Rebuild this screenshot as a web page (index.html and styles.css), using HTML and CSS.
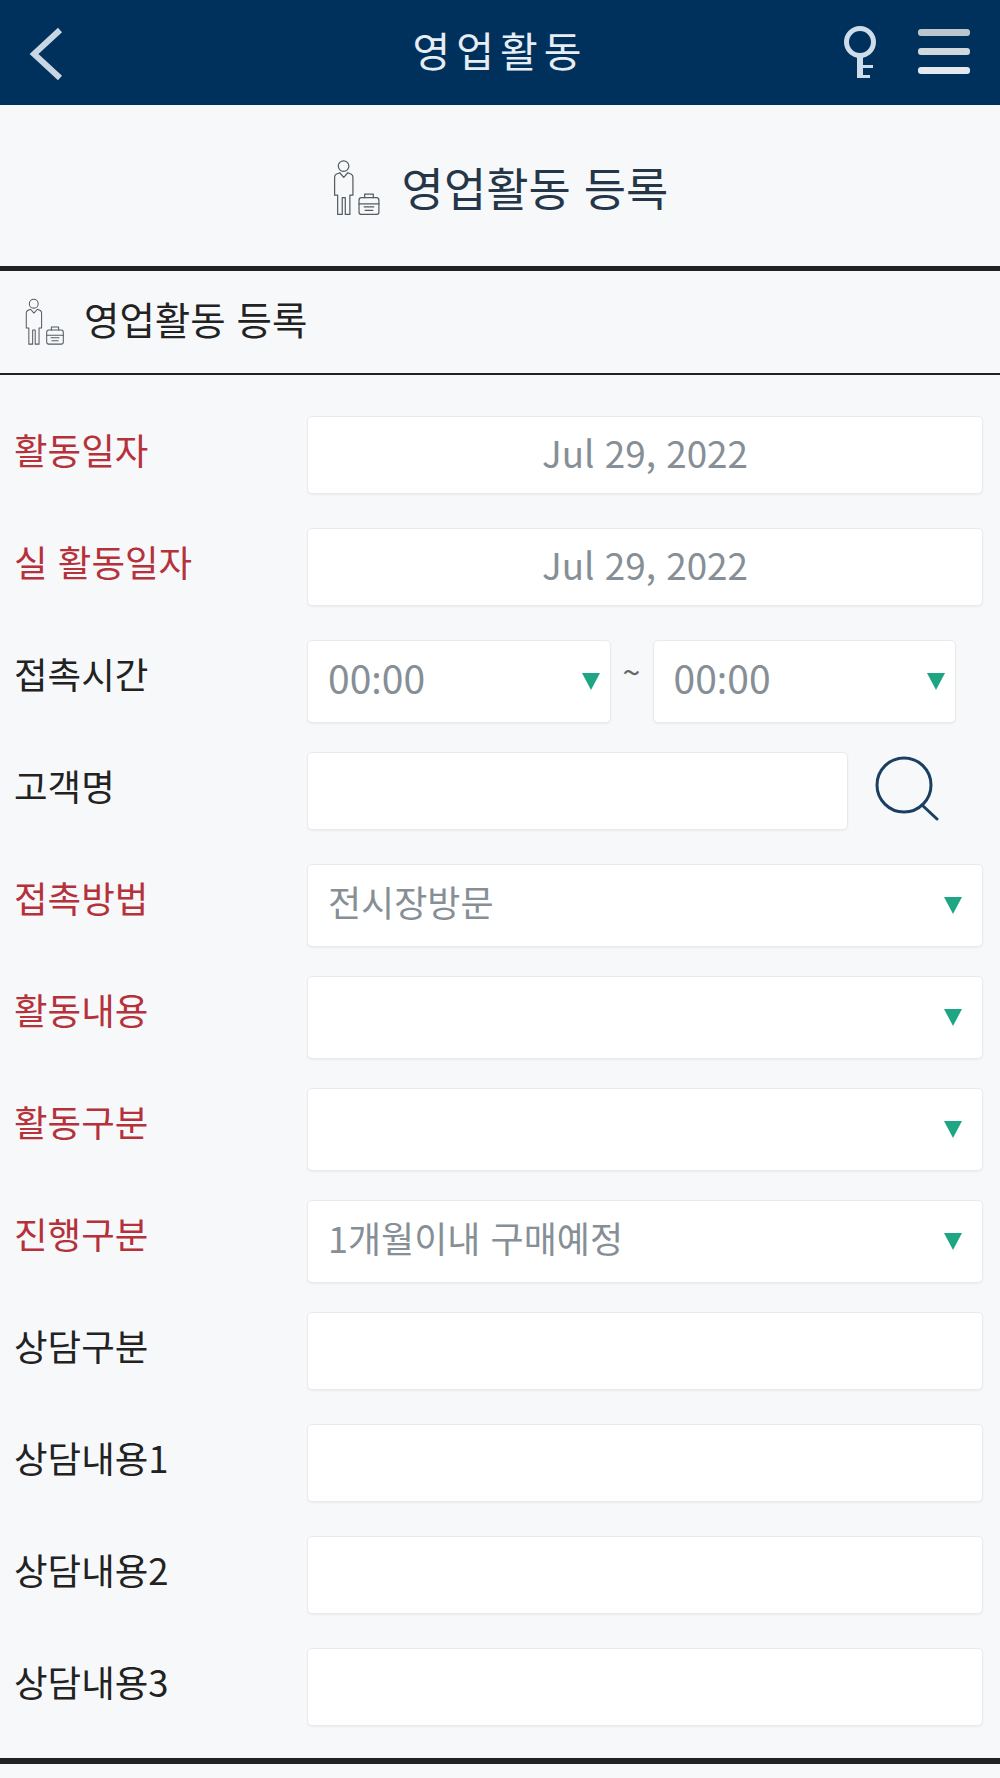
FILE: index.html
```html
<!DOCTYPE html>
<html lang="ko">
<head>
<meta charset="utf-8">
<title>영업활동 등록</title>
<link rel="stylesheet" href="styles.css">
</head>
<body>
<svg class="defs" width="0" height="0" aria-hidden="true">
  <symbol id="sales-person" viewBox="22 21 47 55">
    <g fill="none" stroke="#555b60" stroke-width="1.2" stroke-linejoin="round" stroke-linecap="round">
      <circle cx="32.3" cy="27" r="5.2"/>
      <path d="M28.5 33.5 L32.5 38 L36.5 33.5 L40 35 Q41.5 36 41.5 38 V55.5 H38.5 V74.5 H34 V58 H31 V74.5 H26.5 V55.5 H23.5 V38 Q23.5 36 25 35 Z"/>
      <rect x="47.5" y="58" width="19.5" height="16.5" rx="2.5"/>
      <path d="M53 58 V54.5 H61.5 V58 M47.5 64 H67 M52.5 67 H62 M53.5 70.5 H61"/>
    </g>
  </symbol>
</svg>

<header class="topbar">
  <svg class="back" viewBox="0 0 40 56"><path d="M33 4 L7 28 L33 52" fill="none" stroke="#c8d6e3" stroke-width="6"/></svg>
  <h1 class="topbar-title">영업활동</h1>
  <svg class="key" viewBox="0 0 40 56">
    <g fill="none" stroke="#cfdce9">
      <circle cx="17" cy="17" r="13.5" stroke-width="5"/>
      <path d="M17 30 V53" stroke-width="6"/>
      <path d="M17 41.5 H30 M17 51.5 H27" stroke-width="3"/>
    </g>
  </svg>
  <div class="burger"><i class="b1"></i><i class="b2"></i><i class="b3"></i></div>
</header>

<section class="page-head">
  <svg class="icon-lg"><use href="#sales-person"/></svg>
  <h2 class="page-title">영업활동 등록</h2>
</section>

<section class="card">
  <div class="card-head">
    <svg class="icon-sm"><use href="#sales-person"/></svg>
    <h3 class="card-title">영업활동 등록</h3>
  </div>

  <form class="form">
    <div class="label req">활동일자</div>
    <div class="field center">Jul 29, 2022</div>

    <div class="label req">실 활동일자</div>
    <div class="field center">Jul 29, 2022</div>

    <div class="label">접촉시간</div>
    <div class="time-range">
      <div class="field select tight">00<span class="colon">:</span>00<b class="caret"></b></div>
      <span class="tilde">~</span>
      <div class="field select tight">00<span class="colon">:</span>00<b class="caret"></b></div>
    </div>

    <div class="label">고객명</div>
    <div class="search-row">
      <div class="field grow"></div>
      <svg class="search" viewBox="0 0 64 66">
        <circle cx="29" cy="29" r="27" fill="none" stroke="#1b3f60" stroke-width="3"/>
        <path d="M47 49 L62 63" fill="none" stroke="#1b3f60" stroke-width="3" stroke-linecap="round"/>
      </svg>
    </div>

    <div class="label req">접촉방법</div>
    <div class="field select">전시장방문<b class="caret"></b></div>

    <div class="label req">활동내용</div>
    <div class="field select"><b class="caret"></b></div>

    <div class="label req">활동구분</div>
    <div class="field select"><b class="caret"></b></div>

    <div class="label req">진행구분</div>
    <div class="field select">1개월이내 구매예정<b class="caret"></b></div>

    <div class="label">상담구분</div>
    <div class="field"></div>

    <div class="label">상담내용1</div>
    <div class="field"></div>

    <div class="label">상담내용2</div>
    <div class="field"></div>

    <div class="label">상담내용3</div>
    <div class="field"></div>
  </form>
</section>
</body>
</html>
```

FILE: styles.css
```css
* { box-sizing: border-box; }

html, body {
  margin: 0;
  background: #f7f8fa;
}

body {
  font-family: "Noto Sans CJK KR", "Noto Sans", sans-serif;
  color: #222;
}

.defs { display: block; height: 0; }

/* Top navigation bar */
.topbar {
  height: 105px;
  background: #00315c;
  display: flex;
  align-items: center;
  position: relative;
}

.back {
  position: absolute;
  left: 27px;
  top: 26px;
  width: 40px;
  height: 56px;
}

.topbar-title {
  flex: 1;
  margin: 0 0 8px;
  text-align: center;
  font-size: 41px;
  line-height: 60px;
  font-weight: 400;
  letter-spacing: 6px;
  color: #e6edf3;
}

.key {
  position: absolute;
  left: 843px;
  top: 25px;
  width: 40px;
  height: 56px;
}

.burger {
  position: absolute;
  left: 918px;
  top: 29px;
  width: 52px;
  display: flex;
  flex-direction: column;
  gap: 12px;
}

.burger i {
  display: block;
  height: 7px;
  border-radius: 3px;
}

.b1 { background: #bcc4ce; }
.b2 { background: #d0d7df; }
.b3 { background: #e4e9ef; }

/* Page heading */
.page-head {
  height: 161px;
  display: flex;
  align-items: center;
  justify-content: center;
  gap: 20px;
}

.icon-lg { width: 50px; height: 56px; margin-top: 5px; }
.icon-sm { width: 40px; height: 48px; margin-top: 8px; }

.page-title {
  margin: 0;
  font-size: 46px;
  line-height: 60px;
  font-weight: 400;
  color: #243648;
}

/* Form card */
.card {
  border-top: 5px solid #222;
  border-bottom: 6px solid #222;
}

.card-head {
  height: 104px;
  display: flex;
  align-items: center;
  gap: 19px;
  padding: 0 0 8px 25px;
  border-bottom: 2px solid #222;
}

.card-title {
  margin: 0;
  font-size: 38.5px;
  line-height: 50px;
  font-weight: 400;
  color: #222;
}

.form {
  display: grid;
  grid-template-columns: 293px 676px;
  grid-template-rows: repeat(11, 112px) 110px;
  padding: 41px 0 0 14px;
}

.label {
  font-size: 36.5px;
  line-height: 77px;
  margin-top: -5px;
  white-space: nowrap;
  color: #222;
}

.req { color: #b5323a; }

.field {
  height: 78px;
  background: #fff;
  border: 1px solid #e8eaed;
  border-radius: 5px;
  box-shadow: 0 1px 2px rgba(0, 0, 0, .05);
  padding: 0 20px;
  font-size: 36px;
  line-height: 71px;
  color: #868e96;
  position: relative;
}

.center { text-align: center; font-size: 36.8px; }

.select { height: 83px; line-height: 72px; }
.tight { flex: 1; font-size: 39px; }

/* The CJK face draws its colon high between digits, so this one uses the Latin face */
.colon { font-family: "Noto Sans", sans-serif; }

/* Dropdown arrow inside a select-style field */
.caret {
  position: absolute;
  right: 20px;
  top: 32px;
  width: 0;
  height: 0;
  border-left: 9.5px solid transparent;
  border-right: 9.5px solid transparent;
  border-top: 17px solid #1ea584;
}

.tight .caret { right: 10px; }

.time-range {
  display: flex;
  width: 649px;
  align-items: flex-start;
}

.tilde {
  width: 42px;
  text-align: center;
  font-size: 32px;
  line-height: 62px;
  color: #666;
}

.search-row {
  display: flex;
  align-items: flex-start;
}

.grow { flex: 0 0 541px; }

.search {
  width: 64px;
  height: 66px;
  margin: 4px 0 0 27px;
}
```
